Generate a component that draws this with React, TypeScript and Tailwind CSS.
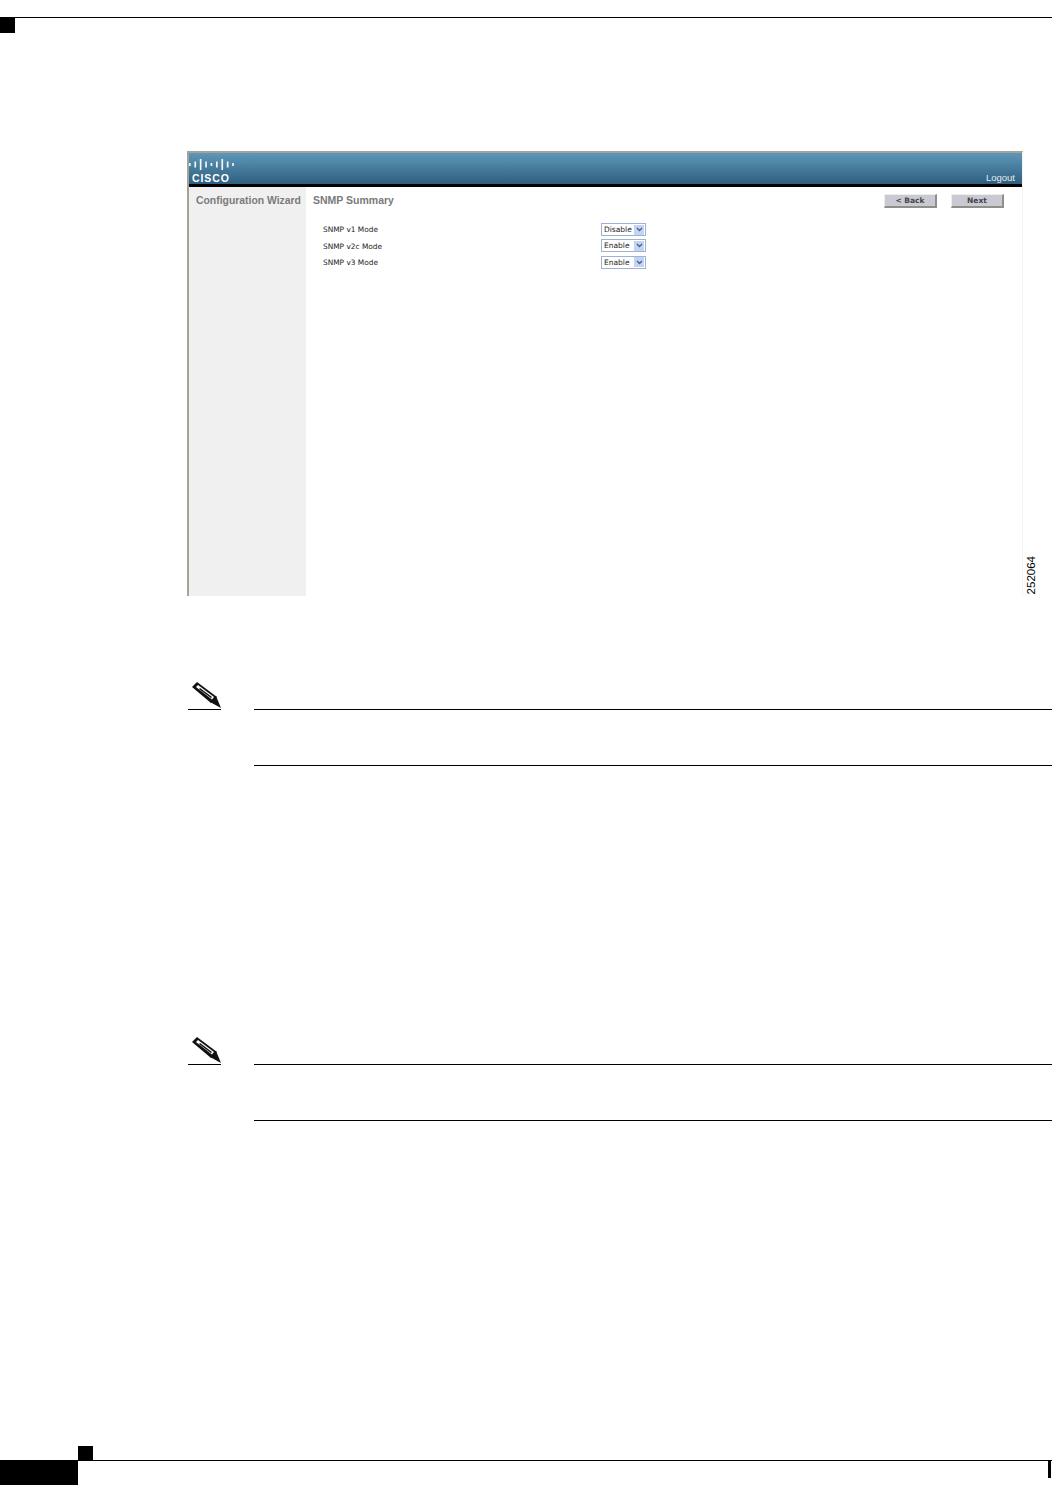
// App.tsx
const SNMP_ROWS = [
  { label: "SNMP v1 Mode", value: "Disable" },
  { label: "SNMP v2c Mode", value: "Enable" },
  { label: "SNMP v3 Mode", value: "Enable" },
];

const LOGO_BARS = [
  [0, 3],
  [5.4, 6],
  [10.8, 11],
  [16.2, 6],
  [21.6, 3],
  [27, 6],
  [32.4, 11],
  [37.8, 6],
  [43.2, 3],
];

export default function App() {
  return (
    <div className="flex h-[1485px] w-[1052px] flex-col overflow-hidden bg-white font-['Liberation_Sans',sans-serif]">
      {/* Running header */}
      <div className="mt-[17px] h-px w-full bg-black" />
      <div className="h-[15px] w-[15px] bg-black" />

      {/* Figure */}
      <div className="mt-[118px] ml-[187px] flex items-end">
        <div className="flex h-[445px] w-[836px] flex-col border-t-2 border-l-2 border-r border-[#a3a39a] border-r-[#f4f4f4]">
          <div className="flex h-[31px] items-end justify-between bg-gradient-to-b from-[#5f97b8] to-[#2e5f80] pr-[7px]">
            <CiscoLogo />
            <span className="mb-px text-[9.5px] leading-[11px] text-[#e4edf2]">Logout</span>
          </div>
          <div className="h-[3px] bg-black" />
          <div className="flex min-h-0 flex-1">
            <aside className="w-[117px] bg-[#f0f0f0] pt-[8px] pl-[7px]">
              <h2 className="text-[10.4px] leading-[12px] font-bold whitespace-nowrap text-[#7a7a7a]">Configuration Wizard</h2>
            </aside>
            <main className="flex-1 pt-[7px]">
              <div className="flex items-start justify-between pr-[18px] pl-[7px]">
                <h1 className="text-[10.5px] leading-[12px] font-bold text-[#7a7a7a]">SNMP Summary</h1>
                <div className="flex gap-[14px]">
                  <WizardButton label="< Back" />
                  <WizardButton label="Next" />
                </div>
              </div>
              <div className="mt-[15px] flex flex-col gap-[3.33px] pl-[17px]">
                {SNMP_ROWS.map((row) => (
                  <div key={row.label} className="flex h-[13px] items-center">
                    <span className="w-[278px] pt-px font-['DejaVu_Sans',sans-serif] text-[7.4px] text-[#222]">{row.label}</span>
                    <SelectBox value={row.value} />
                  </div>
                ))}
              </div>
            </main>
          </div>
        </div>
        <span className="mb-[2px] ml-[2px] rotate-180 text-[11.5px] leading-[13px] text-black [writing-mode:vertical-rl]">252064</span>
      </div>

      {/* Notes */}
      <NoteBlock className="mt-[86px]" />
      <NoteBlock className="mt-[271px]" />

      {/* Running footer */}
      <div className="mt-auto flex h-[39px] flex-col">
        <div className="ml-[78px] h-[14px] w-[15px] bg-black" />
        <div className="flex flex-1">
          <div className="w-[78px] bg-black" />
          <div className="flex flex-1 items-start justify-end border-t border-black pr-px">
            <div className="h-[17px] w-[3px] bg-black" />
          </div>
        </div>
      </div>
    </div>
  );
}

function CiscoLogo() {
  return (
    <div className="flex flex-col items-start">
      <svg width="46" height="12" viewBox="0 0 46 12">
        {LOGO_BARS.map(([x, h]) => (
          <rect key={x} x={x} y={(11 - h) / 2} width="1.7" height={h} fill="#f2f6f8" />
        ))}
      </svg>
      <span className="mt-[2px] ml-[3px] text-[10.5px] leading-[11px] font-bold tracking-[0.9px] text-white">CISCO</span>
    </div>
  );
}

function WizardButton({ label }: { label: string }) {
  return (
    <button className="flex h-[14px] w-[53px] items-center justify-center border-t border-l border-r-2 border-b-2 border-t-[#eeeeee] border-l-[#eeeeee] border-r-[#8f8f88] border-b-[#8f8f88] bg-[#c9c9d3] font-['DejaVu_Sans',sans-serif] text-[7.5px] font-bold text-[#444]">
      {label}
    </button>
  );
}

function SelectBox({ value }: { value: string }) {
  return (
    <div className="flex h-[13px] w-[45px] items-center justify-between border border-[#9db2d4] bg-white pr-px pl-[2px]">
      <span className="font-['DejaVu_Sans',sans-serif] text-[7.5px] text-[#222]">{value}</span>
      <span className="flex h-[10px] w-[10px] items-center justify-center bg-[#c3d3f4]">
        <svg width="7" height="5" viewBox="0 0 7 5">
          <path d="M1 1 L3.5 3.5 L6 1" fill="none" stroke="#4d6185" strokeWidth="1.4" />
        </svg>
      </span>
    </div>
  );
}

function NoteBlock({ className }: { className: string }) {
  return (
    <div className={`ml-[188px] flex ${className}`}>
      <div className="flex h-[28px] w-[33px] flex-col justify-end border-b border-black">
        <svg width="33" height="27" viewBox="0 0 33 27">
          <path d="M4 5 L9 0 L29 15 L23 21 Z" fill="#111" />
          <path d="M8 5 L10 3 L26 15 L24 17.5 Z" fill="#fff" />
          <path d="M11 7 L12 6 L24 15 L23 16 Z" fill="#111" />
          <path d="M28 14 L33 26 L22 20 Z" fill="#111" />
        </svg>
      </div>
      <div className="mt-[27px] ml-[33px] h-[57px] flex-1 border-y border-black" />
    </div>
  );
}
